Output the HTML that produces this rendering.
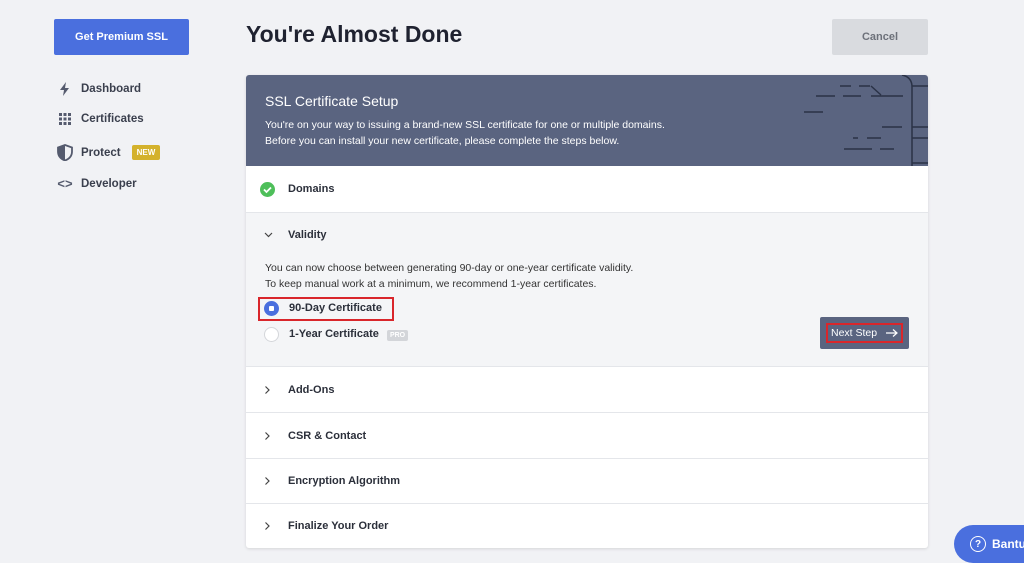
<!DOCTYPE html>
<html><head><style>
*{margin:0;padding:0;box-sizing:border-box}
body{width:1024px;height:561px;overflow:hidden;background:#f1f2f5;font-family:"Liberation Sans",sans-serif;color:#2b2f3a;position:relative}
.abs{position:absolute}
.btn{position:absolute;display:flex;align-items:center;justify-content:center;font-size:11px;font-weight:bold;border-radius:2px}
.nav{position:absolute;left:54px;font-size:11.5px;font-weight:bold;color:#3a3f4d;display:flex;align-items:center}
.nav .ic{width:22px;margin-right:5px;display:flex;justify-content:center}
.card{position:absolute;left:246px;top:75px;width:682px;height:473px;background:#fff;border-radius:3px;box-shadow:0 1px 3px rgba(0,0,0,.12);overflow:hidden}
.row{position:absolute;left:0;width:682px;border-top:1px solid #e4e6ea;display:flex;align-items:center;font-size:11px;font-weight:bold;color:#2b2f3a}
.chev{width:42px;display:flex;justify-content:center}
</style></head><body>
<div class="btn" style="left:54px;top:19px;width:135px;height:36px;background:#4a6fde;color:#fff">Get Premium SSL</div>
<div class="abs" style="left:246px;top:21px;font-size:23px;font-weight:bold;color:#1f2230">You're Almost Done</div>
<div class="btn" style="left:832px;top:19px;width:96px;height:36px;background:#d9dbdf;color:#6d717a">Cancel</div>

<div class="nav" style="top:82px"><span class="ic"><svg width="12" height="14" viewBox="0 0 12 14"><path d="M7 0L1 8h4l-1 6 6-8H6z" fill="#555b6e"/></svg></span>Dashboard</div>
<div class="nav" style="top:113px"><span class="ic"><svg width="12" height="12"><g fill="#555b6e"><rect x="0" y="0" width="3" height="3"/><rect x="4.5" y="0" width="3" height="3"/><rect x="9" y="0" width="3" height="3"/><rect x="0" y="4.5" width="3" height="3"/><rect x="4.5" y="4.5" width="3" height="3"/><rect x="9" y="4.5" width="3" height="3"/><rect x="0" y="9" width="3" height="3"/><rect x="4.5" y="9" width="3" height="3"/><rect x="9" y="9" width="3" height="3"/></g></svg></span>Certificates</div>
<div class="nav" style="top:144px"><span class="ic"><svg width="16" height="17" viewBox="0 0 16 17"><path d="M8 1L1 3.5v4C1 12 4 15 8 16.5 12 15 15 12 15 7.5v-4z" fill="none" stroke="#555b6e" stroke-width="1.8"/><path d="M8 1L1 3.5v4C1 12 4 15 8 16.5z" fill="#555b6e"/></svg></span>Protect<span style="margin-left:11px;background:#d4b22c;color:#fff;font-size:8px;padding:3px 5px;border-radius:2px">NEW</span></div>
<div class="nav" style="top:176px"><span class="ic" style="font-size:13px;color:#555b6e">&lt;&gt;</span>Developer</div>

<div class="card">
 <div class="abs" style="left:0;top:0;width:682px;height:91px;background:#5a6480">
  <div class="abs" style="left:19px;top:18px;color:#fff;font-size:14px">SSL Certificate Setup</div>
  <div class="abs" style="left:19px;top:42px;color:#fff;font-size:10.5px;line-height:16px">You're on your way to issuing a brand-new SSL certificate for one or multiple domains.<br>Before you can install your new certificate, please complete the steps below.</div>
  <svg class="abs" style="left:514px;top:0" width="168" height="91"><g stroke="#2a3246" stroke-width="1.5" fill="none">
   <path d="M80 11h11M99 11h11M111 11l10 9M111 21h32M56 21h19M83 21h18M44 37h19M122 52h20M93 63h5M107 63h14M84 74h28M120 74h14M152 11h20M152 52h17M152 63h17M152 88h17"/>
   <path d="M142 0q10 2 10 12v79"/></g></svg>
 </div>
 <div class="row" style="top:91px;height:46px;border-top:none"><span style="width:42px;display:flex;justify-content:center"><svg width="15" height="15"><circle cx="7.5" cy="7.5" r="7.5" fill="#4ebf5a"/><path d="M4 7.5l2.5 2.5 4.5-4.5" stroke="#fff" stroke-width="1.8" fill="none"/></svg></span>Domains</div>
 <div class="abs" style="left:0;top:137px;width:682px;height:154px;background:#f4f5f7;border-top:1px solid #e4e6ea">
  <div class="abs" style="left:18px;top:16px;font-size:11px;font-weight:bold;display:flex;align-items:center"><svg width="24" height="10"><path d="M1 3l3.5 3.5L8 3" stroke="#444" stroke-width="1.2" fill="none"/></svg>Validity</div>
  <div class="abs" style="left:19px;top:48px;font-size:10.5px;line-height:15.5px;color:#333">You can now choose between generating 90-day or one-year certificate validity.<br>To keep manual work at a minimum, we recommend 1-year certificates.</div>
  <div class="abs" style="left:12px;top:84px;width:136px;height:24px;border:2px solid #d9262b"></div>
  <div class="abs" style="left:18px;top:88px;width:15px;height:15px;border-radius:50%;background:#4a6fde"><div style="margin:5px;width:5px;height:5px;background:#fff;border-radius:1px"></div></div>
  <div class="abs" style="left:43px;top:89px;font-size:11px;font-weight:bold">90-Day Certificate</div>
  <div class="abs" style="left:18px;top:114px;width:15px;height:15px;border-radius:50%;background:#fff;border:1px solid #d4d6da"></div>
  <div class="abs" style="left:43px;top:115px;font-size:11px;font-weight:bold">1-Year Certificate <span style="background:#d3d5d9;color:#fff;font-size:7px;padding:2px 3px;border-radius:2px;margin-left:5px">PRO</span></div>
  <div class="abs" style="left:574px;top:104px;width:89px;height:32px;background:#5a6480;border-radius:2px"><div style="margin:6px 6px;height:20px;border:2px solid #d9262b;color:#fff;font-size:10.5px;display:flex;align-items:center;padding-left:3px">Next Step<svg style="margin-left:8px" width="14" height="10"><path d="M1 5h11M8 1.5L12 5 8 8.5" stroke="#fff" stroke-width="1.2" fill="none"/></svg></div></div>
 </div>
 <div class="row" style="top:291px;height:46px"><span class="chev"><svg width="8" height="10"><path d="M2.5 1.5L6 5 2.5 8.5" stroke="#444" stroke-width="1.2" fill="none"/></svg></span>Add-Ons</div>
 <div class="row" style="top:337px;height:46px"><span class="chev"><svg width="8" height="10"><path d="M2.5 1.5L6 5 2.5 8.5" stroke="#444" stroke-width="1.2" fill="none"/></svg></span>CSR &amp; Contact</div>
 <div class="row" style="top:383px;height:45px"><span class="chev"><svg width="8" height="10"><path d="M2.5 1.5L6 5 2.5 8.5" stroke="#444" stroke-width="1.2" fill="none"/></svg></span>Encryption Algorithm</div>
 <div class="row" style="top:428px;height:45px"><span class="chev"><svg width="8" height="10"><path d="M2.5 1.5L6 5 2.5 8.5" stroke="#444" stroke-width="1.2" fill="none"/></svg></span>Finalize Your Order</div>
</div>
<div class="abs" style="left:954px;top:525px;width:100px;height:38px;border-radius:19px;background:#4a6fde;color:#fff;font-size:12px;font-weight:bold;display:flex;align-items:center;padding-left:16px"><span style="width:16px;height:16px;border:1.5px solid #fff;border-radius:50%;font-size:10px;display:flex;align-items:center;justify-content:center;margin-right:6px">?</span>Bantu</div>
</body></html>
